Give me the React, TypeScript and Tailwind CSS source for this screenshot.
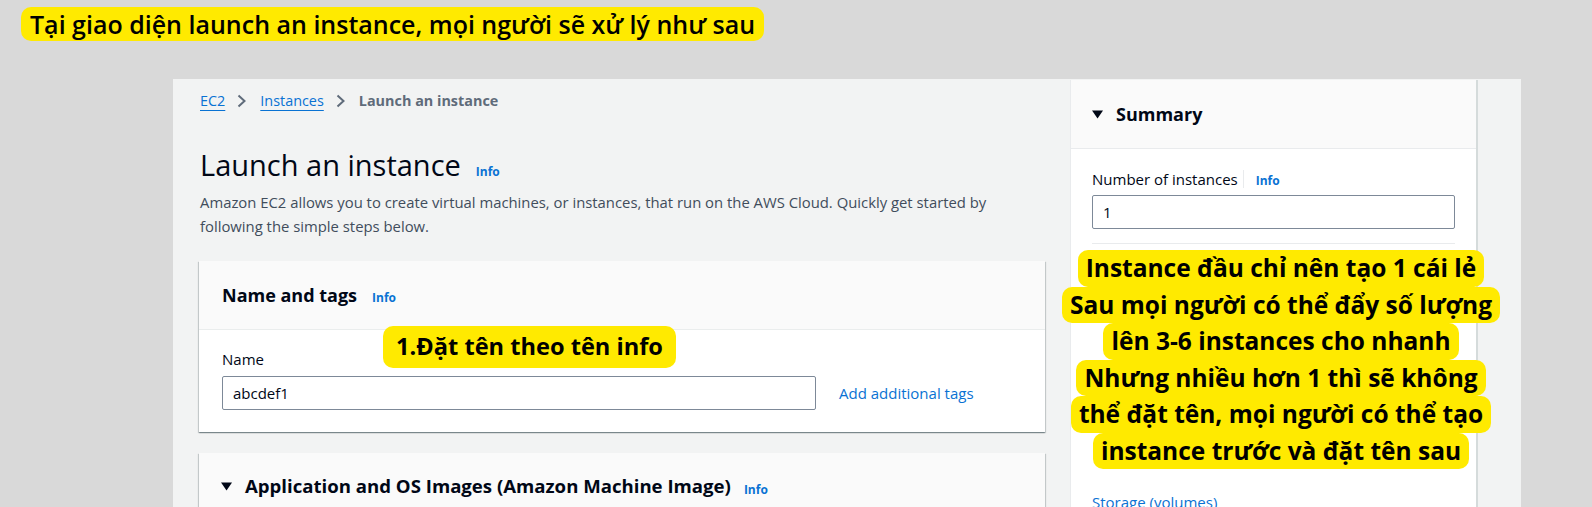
import React from 'react';

function Chevron() {
  return (
    <svg width="9" height="14" viewBox="0 0 9 14" className="ml-[12px] mr-[14px] shrink-0">
      <path d="M1.5 1.5l6 5.5-6 5.5" fill="none" stroke="#5f6b7a" strokeWidth="2" />
    </svg>
  );
}

function Caret() {
  return (
    <svg width="11" height="9" viewBox="0 0 11 9" className="shrink-0">
      <path d="M0 0.5h11L5.5 8.5z" fill="#000716" />
    </svg>
  );
}

function Info() {
  return <span className="text-[12px] font-bold text-[#0972d3]">Info</span>;
}

const hint = [
  'Instance đầu chỉ nên tạo 1 cái lẻ',
  'Sau mọi người có thể đẩy số lượng',
  'lên 3-6 instances cho nhanh',
  'Nhưng nhiều hơn 1 thì sẽ không',
  'thể đặt tên, mọi người có thể tạo',
  'instance trước và đặt tên sau',
];

export default function App() {
  return (
    <div className="relative w-[1592px] h-[507px] overflow-hidden bg-[#d9d9d9]">
      {/* top caption */}
      <div className="h-[79px] pt-[7px] pl-[21px]">
        <span className="inline-block h-[34px] px-[9px] rounded-[10px] bg-[#ffea00] leading-[34px] text-[25px] font-semibold text-black font-['Open_Sans',sans-serif]">
          Tại giao diện launch an instance, mọi người sẽ xử lý như sau
        </span>
      </div>

      {/* console screenshot */}
      <div className="ml-[173px] w-[1348px] h-[428px] bg-[#f2f3f3] flex overflow-hidden font-['Open_Sans',sans-serif] text-[#000716]">
        <div className="w-[872px] pl-[26px] pt-[12px] shrink-0">
          <div className="flex items-center h-[20px] text-[14.4px] pl-[1px]">
            <span className="text-[#0972d3] underline underline-offset-[4px]">EC2</span>
            <Chevron />
            <span className="text-[#0972d3] underline underline-offset-[4px]">Instances</span>
            <Chevron />
            <span className="font-bold text-[#5f6b7a]">Launch an instance</span>
          </div>

          <div className="mt-[36px] flex items-baseline h-[36px] leading-[36px] pl-[1px]">
            <h1 className="text-[29px] font-normal">Launch an instance</h1>
            <span className="ml-[15px]"><Info /></span>
          </div>
          <p className="mt-[7px] text-[14.85px] leading-[24px] text-[#414d5c] pl-[1px] whitespace-nowrap">
            Amazon EC2 allows you to create virtual machines, or instances, that run on the AWS Cloud. Quickly get started by
            <br />
            following the simple steps below.
          </p>

          <div className="mt-[23px] w-[846px] bg-white shadow-[0_1px_1px_0_rgba(0,28,36,0.3),1px_1px_1px_0_rgba(0,28,36,0.15),-1px_1px_1px_0_rgba(0,28,36,0.15)]">
            <div className="h-[69px] px-[23px] flex items-center bg-[#fafafa] border-b border-[#eaeded]">
              <span className="text-[18px] font-bold">Name and tags</span>
              <span className="ml-[15px] mt-[2px]"><Info /></span>
            </div>
            <div className="pt-[19px] pb-[22px] px-[23px]">
              <div className="text-[15px] leading-[20px] text-[#000716]">Name</div>
              <div className="mt-[7px] flex items-center">
                <div className="w-[594px] h-[34px] border border-[#7d8998] rounded-[2px] pl-[10px] flex items-center text-[15px]">
                  abcdef1
                </div>
                <span className="ml-[23px] text-[15px] text-[#0972d3]">Add additional tags</span>
              </div>
            </div>
          </div>

          <div className="mt-[21px] w-[846px] h-[80px] bg-[#fafafa] shadow-[0_1px_1px_0_rgba(0,28,36,0.3),1px_1px_1px_0_rgba(0,28,36,0.15),-1px_1px_1px_0_rgba(0,28,36,0.15)]">
            <div className="pt-[21px] pl-[22px] flex items-center h-[24px] box-content">
              <Caret />
              <span className="ml-[13px] text-[18.6px] font-bold leading-[24px]">
                Application and OS Images (Amazon Machine Image)
              </span>
              <span className="ml-[13px] mt-[3px]"><Info /></span>
            </div>
          </div>
        </div>

        <div className="ml-[25px] mt-[1px] w-[408px] shrink-0 bg-white border-l border-[#e9ebed] border-r-2 border-r-[#d5dbdb]">
          <div className="h-[69px] pl-[21px] flex items-center bg-[#fafafa] border-b border-[#e9ebed]">
            <Caret />
            <span className="ml-[13px] text-[18px] font-bold">Summary</span>
          </div>
          <div className="pl-[21px] pr-[21px] pt-[20px]">
            <div className="flex items-center h-[20px] text-[15px]">
              <span>Number of instances</span>
              <span className="ml-[5px] w-px h-[18px] bg-[#e9ebed]" />
              <span className="ml-[12px] mt-[1px]"><Info /></span>
            </div>
            <div className="mt-[6px] h-[34px] border border-[#7d8998] rounded-[2px] pl-[10px] flex items-center text-[15px]">
              1
            </div>
            <div className="mt-[14px] h-px bg-[#e9ebed]" />
            <div className="mt-[204px] pl-[14px] text-[15px] leading-[20px]">Software Image (AMI)</div>
            <div className="mt-[24px] text-[15px] leading-[20px] text-[#0972d3]">Storage (volumes)</div>
          </div>
        </div>
      </div>

      {/* annotations */}
      <div className="absolute left-[383px] top-[326px] w-[293px] h-[42px] rounded-[10px] bg-[#ffea00] flex items-center justify-center text-[23.6px] font-bold text-black font-['Open_Sans',sans-serif] whitespace-nowrap">
        1.Đặt tên theo tên info
      </div>
      <div className="absolute left-[1030px] top-[250px] w-[502px] flex flex-col items-center font-['Open_Sans',sans-serif] text-[24.5px] font-bold text-black">
        {hint.map((line) => (
          <div key={line} className="h-[36.5px] leading-[36.5px] px-[8px] rounded-[10px] bg-[#ffea00] whitespace-nowrap">
            {line}
          </div>
        ))}
      </div>
    </div>
  );
}
